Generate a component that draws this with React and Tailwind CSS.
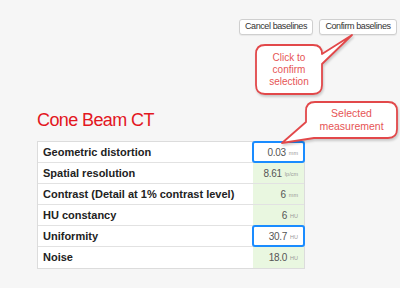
import React from 'react';

const rows = [
  { label: 'Geometric distortion', value: '0.03', unit: 'mm', picked: true },
  { label: 'Spatial resolution', value: '8.61', unit: 'lp/cm' },
  { label: 'Contrast (Detail at 1% contrast level)', value: '6', unit: 'mm' },
  { label: 'HU constancy', value: '6', unit: 'HU' },
  { label: 'Uniformity', value: '30.7', unit: 'HU', picked: true },
  { label: 'Noise', value: '18.0', unit: 'HU' },
];

function Callouts() {
  return (
    <>
      <svg
        className="absolute left-0 top-0 pointer-events-none drop-shadow-[1px_2px_1px_rgba(0,0,0,0.18)]"
        width="400"
        height="288"
        viewBox="0 0 400 288"
      >
        {/* bubble pointing at the confirm button */}
        <path
          d="M265 45 H313 Q322 45 322 54 L352 35 L322 64 V85 Q322 94 313 94 H265 Q256 94 256 85 V54 Q256 45 265 45 Z"
          fill="#fff"
          stroke="#e2484a"
          strokeWidth="1.8"
          strokeLinejoin="round"
        />
        {/* bubble pointing at the picked cell */}
        <path
          d="M315 102 H388 Q397 102 397 111 V129 Q397 138 388 138 H314 L282 143 L306 122 V111 Q306 102 315 102 Z"
          fill="#fff"
          stroke="#e2484a"
          strokeWidth="1.8"
          strokeLinejoin="round"
        />
      </svg>
      <div className="absolute left-[256px] top-[52px] w-[66px] text-center text-[10px] leading-[12px] text-[#e65555]">
        Click to<br />confirm<br />selection
      </div>
      <div className="absolute left-[306px] top-[107px] w-[91px] text-center text-[10.5px] leading-[13px] text-[#e65555]">
        Selected<br />measurement
      </div>
    </>
  );
}

export default function App() {
  return (
    <div className="relative w-[400px] h-[288px] overflow-hidden bg-[#f6f6f6] font-['Liberation_Sans',Arial,sans-serif]">
      <div className="flex justify-end gap-[6px] pt-[19px] pr-[3px]">
        <button className="w-[74px] h-[16px] rounded-[3px] border border-[#cfcfcf] bg-white text-[9px] tracking-[-0.4px] text-[#333] shadow-[0_1px_1px_rgba(0,0,0,0.06)]">
          Cancel baselines
        </button>
        <button className="w-[78px] h-[16px] rounded-[3px] border border-[#cfcfcf] bg-white text-[9px] tracking-[-0.4px] text-[#333] shadow-[0_1px_1px_rgba(0,0,0,0.06)]">
          Confirm baselines
        </button>
      </div>

      <h2 className="ml-[37px] mt-[75px] text-[18px] leading-[20px] tracking-[-0.6px] text-[#e3171e]">
        Cone Beam CT
      </h2>

      <div className="ml-[37px] mt-[11px] w-[268px] border border-[#dcdcdc] bg-white">
        {rows.map((r, i) => (
          <div
            key={r.label}
            className={`flex h-[21px] ${i < rows.length - 1 ? 'border-b border-[#e2e2e2]' : ''}`}
          >
            <div className="flex-1 flex items-center pl-[5px] text-[11px] font-bold text-[#222]">
              {r.label}
            </div>
            <div
              className={`relative w-[51px] flex items-center justify-end gap-[3px] pr-[6px] ${
                r.picked ? 'bg-white' : 'bg-[#e9f7e0]'
              }`}
            >
              <span className="text-[10px] tracking-[-0.3px] text-[#555]">{r.value}</span>
              <span className="text-[5.5px] text-[#999] pt-[2px]">{r.unit}</span>
              {r.picked && (
                <span className="absolute -left-[1px] -right-[1px] -top-[1px] -bottom-[1px] rounded-[3px] border-[2.5px] border-[#1a8cff]" />
              )}
            </div>
          </div>
        ))}
      </div>

      <Callouts />
    </div>
  );
}
